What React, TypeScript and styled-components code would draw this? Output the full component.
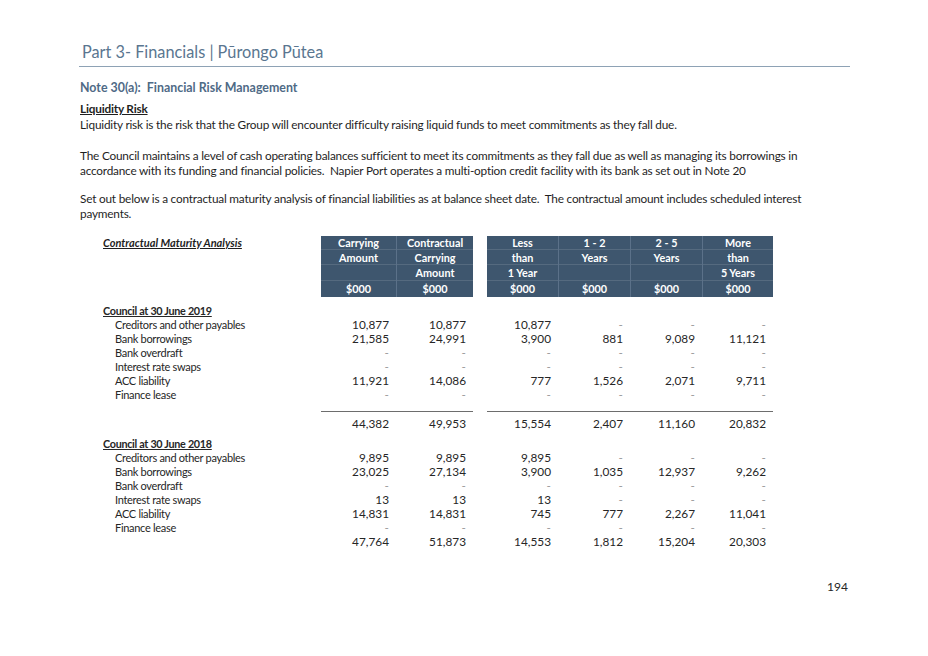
import React from "react";
import styled, { createGlobalStyle } from "styled-components";

const Global = createGlobalStyle`
  html, body { margin: 0; padding: 0; background: #ffffff; }
  body { font-family: Lato, "Open Sans", sans-serif; color: #1f1f1f; }
`;

const Page = styled.div`
  width: 928px;
  height: 656px;
  box-sizing: border-box;
  padding: 38px 78px 0 80px;
  position: relative;
`;

const Title = styled.h1`
  margin: 0 0 0 2px;
  font-weight: 400;
  font-size: 16.3px;
  line-height: 28px;
  color: #5a7690;
`;

const Rule = styled.div`
  height: 0;
  border-top: 1.5px solid #8ea2b5;
  margin: 0 0 0 -1px;
`;

const NoteHeading = styled.h2`
  margin: 13px 0 0 0;
  font-weight: 700;
  font-size: 12.4px;
  line-height: 16px;
  color: #4f6a86;
`;

const SubHeading = styled.div`
  margin-top: 5px;
  font-weight: 700;
  font-size: 11.8px;
  letter-spacing: -0.2px;
  line-height: 16px;
  text-decoration: underline;
`;

const Para = styled.p<{ $gap?: number }>`
  margin: ${(p) => p.$gap ?? 0}px 0 0 0;
  font-size: 11.8px;
  letter-spacing: -0.2px;
  line-height: 15.5px;
  width: 725px;
`;

const Table = styled.div`
  margin-top: 14px;
  display: flex;
  flex-direction: column;
`;

const cols = "241px 75px 77px 14px 71px 72px 72px 71px";

const HeadRow = styled.div`
  display: grid;
  grid-template-columns: ${cols};
`;

const TableTitle = styled.div`
  padding-left: 23px;
  font-weight: 700;
  font-style: italic;
  font-size: 11px;
  line-height: 14px;
  text-decoration: underline;
`;

const HeadCell = styled.div<{ $first?: boolean }>`
  background: #3e566e;
  color: #ffffff;
  font-weight: 700;
  font-size: 10.8px;
  text-align: center;
  display: flex;
  flex-direction: column;
  border-left: ${(p) => (p.$first ? "none" : "1px solid #5b7189")};
`;

const HeadLine = styled.div<{ $h: number; $last?: boolean }>`
  height: ${(p) => p.$h}px;
  line-height: ${(p) => p.$h}px;
  border-bottom: ${(p) => (p.$last ? "none" : "1px solid rgba(255,255,255,0.12)")};
  box-sizing: border-box;
`;

const Spacer = styled.div``;

const Row = styled.div<{ $top?: number }>`
  display: grid;
  grid-template-columns: ${cols};
  height: 14px;
  line-height: 14px;
  margin-top: ${(p) => p.$top ?? 0}px;
`;

const Label = styled.div<{ $group?: boolean }>`
  padding-left: ${(p) => (p.$group ? 23 : 35)}px;
  font-size: ${(p) => (p.$group ? 10.8 : 11)}px;
  letter-spacing: -0.3px;
  font-weight: ${(p) => (p.$group ? 700 : 400)};
  text-decoration: ${(p) => (p.$group ? "underline" : "none")};
  white-space: nowrap;
  color: #262626;
`;

const Num = styled.div<{ $dash?: boolean }>`
  text-align: right;
  padding-right: 7px;
  font-size: 11.8px;
  color: ${(p) => (p.$dash ? "#9a9a9a" : "#262626")};
`;

const TotalRow = styled.div<{ $top?: number }>`
  display: grid;
  grid-template-columns: ${cols};
  margin-top: ${(p) => p.$top ?? 0}px;
  height: 19px;
  line-height: 14px;
`;

const TotalCell = styled.div<{ $rule?: boolean }>`
  text-align: right;
  padding-right: 7px;
  font-size: 11.8px;
  padding-top: ${(p) => (p.$rule ? 5 : 0)}px;
  border-top: ${(p) => (p.$rule ? "1.5px solid #6d6d6d" : "none")};
  color: #262626;
`;

const PageNum = styled.div`
  position: absolute;
  right: 80px;
  top: 579px;
  font-size: 12px;
  line-height: 16px;
  color: #262626;
`;

type Block = {
  title: string;
  rows: [string, string[]][];
  total: string[];
};

const blocks: Block[] = [
  {
    title: "Council at 30 June 2019",
    rows: [
      ["Creditors and other payables", ["10,877", "10,877", "10,877", "-", "-", "-"]],
      ["Bank borrowings", ["21,585", "24,991", "3,900", "881", "9,089", "11,121"]],
      ["Bank overdraft", ["-", "-", "-", "-", "-", "-"]],
      ["Interest rate swaps", ["-", "-", "-", "-", "-", "-"]],
      ["ACC liability", ["11,921", "14,086", "777", "1,526", "2,071", "9,711"]],
      ["Finance lease", ["-", "-", "-", "-", "-", "-"]],
    ],
    total: ["44,382", "49,953", "15,554", "2,407", "11,160", "20,832"],
  },
  {
    title: "Council at 30 June 2018",
    rows: [
      ["Creditors and other payables", ["9,895", "9,895", "9,895", "-", "-", "-"]],
      ["Bank borrowings", ["23,025", "27,134", "3,900", "1,035", "12,937", "9,262"]],
      ["Bank overdraft", ["-", "-", "-", "-", "-", "-"]],
      ["Interest rate swaps", ["13", "13", "13", "-", "-", "-"]],
      ["ACC liability", ["14,831", "14,831", "745", "777", "2,267", "11,041"]],
      ["Finance lease", ["-", "-", "-", "-", "-", "-"]],
    ],
    total: ["47,764", "51,873", "14,553", "1,812", "15,204", "20,303"],
  },
];

const heads: string[][] = [
  ["Carrying", "Amount", ""],
  ["Contractual", "Carrying", "Amount"],
  ["Less", "than", "1 Year"],
  ["1 - 2", "Years", ""],
  ["2 - 5", "Years", ""],
  ["More", "than", "5 Years"],
];

const lineHeights = [14, 15, 16, 16];

function Head({ lines, first }: { lines: string[]; first?: boolean }) {
  const all = [...lines, "$000"];
  return (
    <HeadCell $first={first}>
      {all.map((t, i) => (
        <HeadLine key={i} $h={lineHeights[i]} $last={i === all.length - 1}>
          {t}
        </HeadLine>
      ))}
    </HeadCell>
  );
}

function cells(vals: string[]) {
  const out: React.ReactNode[] = [];
  vals.forEach((v, i) => {
    if (i === 2) out.push(<Spacer key="sp" />);
    out.push(
      <Num key={i} $dash={v === "-"}>
        {v}
      </Num>
    );
  });
  return out;
}

function totals(vals: string[], rule: boolean) {
  const out: React.ReactNode[] = [];
  vals.forEach((v, i) => {
    if (i === 2) out.push(<Spacer key="sp" />);
    out.push(
      <TotalCell key={i} $rule={rule}>
        {v}
      </TotalCell>
    );
  });
  return out;
}

export default function App() {
  return (
    <Page>
      <Global />
      <Title>Part 3- Financials | Pūrongo Pūtea</Title>
      <Rule />
      <NoteHeading>Note 30(a):&nbsp; Financial Risk Management</NoteHeading>
      <SubHeading>Liquidity Risk</SubHeading>
      <Para>
        Liquidity risk is the risk that the Group will encounter difficulty raising liquid funds to meet commitments as they fall due.
      </Para>
      <Para $gap={15}>
        The Council maintains a level of cash operating balances sufficient to meet its commitments as they fall due as well as managing its borrowings in accordance with its funding and financial policies.&nbsp; Napier Port operates a multi-option credit facility with its bank as set out in Note 20
      </Para>
      <Para $gap={12}>
        Set out below is a contractual maturity analysis of financial liabilities as at balance sheet date.&nbsp; The contractual amount includes scheduled interest payments.
      </Para>
      <Table>
        <HeadRow>
          <TableTitle>Contractual Maturity Analysis</TableTitle>
          <Head lines={heads[0]} first />
          <Head lines={heads[1]} />
          <Spacer />
          <Head lines={heads[2]} first />
          <Head lines={heads[3]} />
          <Head lines={heads[4]} />
          <Head lines={heads[5]} />
        </HeadRow>
        {blocks.map((b, bi) => (
          <React.Fragment key={b.title}>
            <Row $top={7}>
              <Label $group>{b.title}</Label>
            </Row>
            {b.rows.map(([label, vals]) => (
              <Row key={label}>
                <Label>{label}</Label>
                {cells(vals)}
              </Row>
            ))}
            <TotalRow $top={bi === 0 ? 9 : 0}>
              <Label />
              {totals(b.total, bi === 0)}
            </TotalRow>
          </React.Fragment>
        ))}
      </Table>
      <PageNum>194</PageNum>
    </Page>
  );
}
